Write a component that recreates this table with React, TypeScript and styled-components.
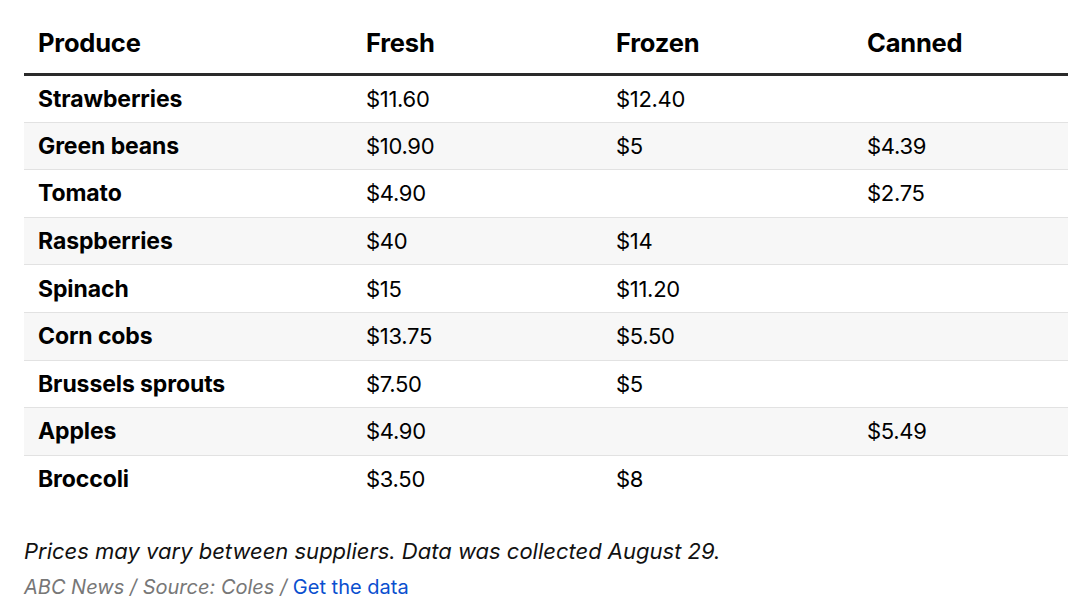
import React from "react";
import styled, { createGlobalStyle } from "styled-components";

const Global = createGlobalStyle`
  html, body { margin: 0; padding: 0; background: #fff; }
  body { font-family: Inter, "Noto Sans", Arial, sans-serif; color: #000; }
`;

const Wrapper = styled.div`
  padding: 0 12px 0 24px;
`;

const Table = styled.table`
  width: 1044px;
  border-collapse: collapse;
  table-layout: fixed;
`;

const Col = styled.col<{ $w: number }>`
  width: ${(p) => p.$w}px;
`;

const HeadCell = styled.th`
  text-align: left;
  font-size: 25.5px;
  font-weight: 700;
  line-height: 32px;
  padding: 27px 14px 14px;
  border-bottom: 3px solid #2a2a2a;
  letter-spacing: -0.2px;
`;

const Row = styled.tr<{ $striped: boolean; $last: boolean }>`
  background: ${(p) => (p.$striped ? "#f7f7f7" : "#fff")};
  border-bottom: ${(p) => (p.$last ? "none" : "1px solid #e2e2e2")};
`;

const Cell = styled.td<{ $bold?: boolean }>`
  height: 47.6px;
  padding: 0 14px;
  box-sizing: border-box;
  vertical-align: middle;
  font-size: ${(p) => (p.$bold ? "23px" : "22px")};
  line-height: 28px;
  font-weight: ${(p) => (p.$bold ? 700 : 400)};
  letter-spacing: ${(p) => (p.$bold ? "-0.1px" : "-0.3px")};
`;

const Note = styled.p`
  margin: 34px 0 0;
  font-size: 22px;
  line-height: 28px;
  font-style: italic;
  color: #111;
`;

const Source = styled.p`
  margin: 9px 0 0;
  font-size: 20px;
  line-height: 26px;
  font-style: italic;
  color: #777;
`;

const DataLink = styled.a`
  font-style: normal;
  color: #0a4fcf;
  text-decoration: none;
`;

const rows: [string, string, string, string][] = [
  ["Strawberries", "$11.60", "$12.40", ""],
  ["Green beans", "$10.90", "$5", "$4.39"],
  ["Tomato", "$4.90", "", "$2.75"],
  ["Raspberries", "$40", "$14", ""],
  ["Spinach", "$15", "$11.20", ""],
  ["Corn cobs", "$13.75", "$5.50", ""],
  ["Brussels sprouts", "$7.50", "$5", ""],
  ["Apples", "$4.90", "", "$5.49"],
  ["Broccoli", "$3.50", "$8", ""],
];

export default function App() {
  return (
    <>
      <Global />
      <Wrapper>
        <Table>
          <colgroup>
            <Col $w={328} />
            <Col $w={250} />
            <Col $w={251} />
            <Col $w={215} />
          </colgroup>
          <thead>
            <tr>
              <HeadCell>Produce</HeadCell>
              <HeadCell>Fresh</HeadCell>
              <HeadCell>Frozen</HeadCell>
              <HeadCell>Canned</HeadCell>
            </tr>
          </thead>
          <tbody>
            {rows.map((r, i) => (
              <Row key={r[0]} $striped={i % 2 === 1} $last={i === rows.length - 1}>
                <Cell $bold>{r[0]}</Cell>
                <Cell>{r[1]}</Cell>
                <Cell>{r[2]}</Cell>
                <Cell>{r[3]}</Cell>
              </Row>
            ))}
          </tbody>
        </Table>
        <Note>Prices may vary between suppliers. Data was collected August 29.</Note>
        <Source>
          ABC News / Source: Coles / <DataLink href="#">Get the data</DataLink>
        </Source>
      </Wrapper>
    </>
  );
}
